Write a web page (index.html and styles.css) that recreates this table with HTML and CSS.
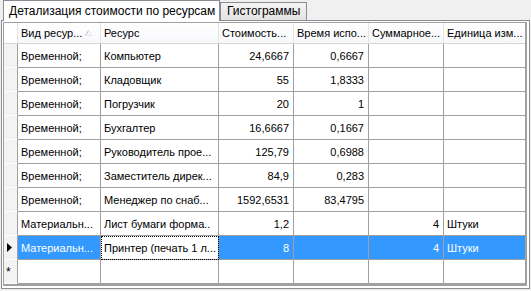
FILE: index.html
```html
<!DOCTYPE html>
<html lang="ru">
<head>
    <meta charset="UTF-8">
    <title>Детализация стоимости</title>
    <link rel="stylesheet" href="styles.css">
</head>
<body>
<div class="tabs">
    <div class="tab active">Детализация стоимости по ресурсам</div>
    <div class="tab second">Гистограммы</div>
</div>
<div class="page">
    <div class="grid">
        <table>
            <colgroup>
                <col class="w-rh">
                <col class="w-kind">
                <col class="w-res">
                <col class="w-num">
                <col class="w-num">
                <col class="w-num">
                <col class="w-unit">
            </colgroup>
            <thead>
            <tr>
                <th class="rh"></th>
                <th>
                    <div class="sort-cell">
                        <span>Вид ресур...</span>
                        <svg class="sort" width="7" height="6" viewBox="0 0 7 6">
                            <path d="M0.5 5.5 L3.5 0.5" stroke="#b4b4b4" fill="none"/>
                            <path d="M3.5 0.5 L6.5 5.5 M0.5 5.5 H6.5" stroke="#e6e6e6" fill="none"/>
                        </svg>
                    </div>
                </th>
                <th>Ресурс</th>
                <th>Стоимость...</th>
                <th>Время испо...</th>
                <th>Суммарное...</th>
                <th class="last">Единица изм...</th>
            </tr>
            </thead>
            <tbody>
            <tr>
                <td class="rh"></td>
                <td>Временной;</td>
                <td>Компьютер</td>
                <td class="num">24,6667</td>
                <td class="num">0,6667</td>
                <td></td>
                <td class="last"></td>
            </tr>
            <tr>
                <td class="rh"></td>
                <td>Временной;</td>
                <td>Кладовщик</td>
                <td class="num">55</td>
                <td class="num">1,8333</td>
                <td></td>
                <td class="last"></td>
            </tr>
            <tr>
                <td class="rh"></td>
                <td>Временной;</td>
                <td>Погрузчик</td>
                <td class="num">20</td>
                <td class="num">1</td>
                <td></td>
                <td class="last"></td>
            </tr>
            <tr>
                <td class="rh"></td>
                <td>Временной;</td>
                <td>Бухгалтер</td>
                <td class="num">16,6667</td>
                <td class="num">0,1667</td>
                <td></td>
                <td class="last"></td>
            </tr>
            <tr>
                <td class="rh"></td>
                <td>Временной;</td>
                <td>Руководитель прое...</td>
                <td class="num">125,79</td>
                <td class="num">0,6988</td>
                <td></td>
                <td class="last"></td>
            </tr>
            <tr>
                <td class="rh"></td>
                <td>Временной;</td>
                <td>Заместитель дирек...</td>
                <td class="num">84,9</td>
                <td class="num">0,283</td>
                <td></td>
                <td class="last"></td>
            </tr>
            <tr>
                <td class="rh"></td>
                <td>Временной;</td>
                <td>Менеджер по снаб...</td>
                <td class="num">1592,6531</td>
                <td class="num">83,4795</td>
                <td></td>
                <td class="last"></td>
            </tr>
            <tr>
                <td class="rh"></td>
                <td>Материальн...</td>
                <td>Лист бумаги форма..</td>
                <td class="num">1,2</td>
                <td class="num"></td>
                <td class="num">4</td>
                <td class="last">Штуки</td>
            </tr>
            <tr class="selected">
                <td class="rh">
                    <svg width="5" height="9" viewBox="0 0 5 9"><path d="M0 0 L5 4.5 L0 9 Z" fill="#000"/></svg>
                </td>
                <td>Материальн...</td>
                <td class="current">Принтер (печать 1 л...</td>
                <td class="num">8</td>
                <td class="num"></td>
                <td class="num">4</td>
                <td class="last">Штуки</td>
            </tr>
            <tr>
                <td class="rh star">*</td>
                <td></td>
                <td></td>
                <td></td>
                <td></td>
                <td></td>
                <td class="last"></td>
            </tr>
            </tbody>
        </table>
    </div>
</div>
</body>
</html>
```

FILE: styles.css
```css
body {
    margin: 0;
    width: 531px;
    height: 291px;
    overflow: hidden;
    background: #f0f0f0;
    font-family: "Liberation Sans", Arial, sans-serif;
    font-size: 11px;
    color: #000;
}

/* tab strip */
.tabs {
    display: flex;
    align-items: flex-end;
    height: 20px;
    padding-left: 3px;
}

.tab {
    box-sizing: border-box;
    height: 18px;
    line-height: 17px;
    padding-left: 6px;
    border: 1px solid #898c95;
    border-bottom: none;
    background: linear-gradient(#f3f3f3, #e3e3e3);
    white-space: nowrap;
}

.tab.active {
    width: 217px;
    height: 21px;
    line-height: 20px;
    padding-left: 5px;
    margin-bottom: -1px;
    background: #fff;
    position: relative;
    z-index: 1;
    font-size: 12px;
}

.tab.second {
    width: 87px;
    margin-left: 0;
    font-size: 12px;
}

/* tab page */
.page {
    box-sizing: border-box;
    width: 529px;
    height: 269px;
    margin-left: 1px;
    padding: 1px;
    border: 1px solid #898c95;
    background: #fff;
}

.grid {
    border: 1px solid #a0a0a0;
    border-right-width: 2px;
    border-bottom-width: 2px;
    background: #f0f0f0;
    height: 261px;
    width: 521px;
}

table {
    border-collapse: separate;
    border-spacing: 0;
    table-layout: fixed;
    width: 521px;
}

.w-rh { width: 14px; }
.w-kind { width: 83px; }
.w-res { width: 118px; }
.w-num { width: 75px; }
.w-unit { width: 81px; }

th, td {
    box-sizing: border-box;
    padding: 0 4px 0 3px;
    overflow: hidden;
    white-space: nowrap;
    text-align: left;
    font-weight: normal;
}

th {
    height: 21px;
    background: linear-gradient(#fff, #f7f8fa);
    border-right: 1px solid #e3e4e6;
    border-bottom: 1px solid #d5d5d5;
}

th.rh {
    background: #fff;
}

.sort-cell {
    display: flex;
    align-items: center;
    justify-content: space-between;
}

.sort {
    margin-right: 4px;
}

td {
    height: 24px;
    background: #fff;
    border-right: 1px solid #a0a0a0;
    border-bottom: 1px solid #a0a0a0;
}

td.last, th.last {
    border-right: none;
}

td.num {
    text-align: right;
}

td.rh {
    padding: 0;
    background: #f3f3f3;
    border-bottom: 1px solid #fcfcfc;
    border-right: 1px solid #a0a0a0;
    text-align: center;
}

td.rh svg {
    display: block;
    margin-left: 3px;
}

td.star {
    text-align: left;
    padding-left: 2px;
    font-size: 12px;
    vertical-align: middle;
}

.selected td {
    background: #3399ff;
    color: #fff;
}

.selected td.rh {
    background: #f3f3f3;
}

.selected td.current {
    background: #fff;
    color: #000;
    outline: 1px dotted #000;
    outline-offset: -1px;
}
```
